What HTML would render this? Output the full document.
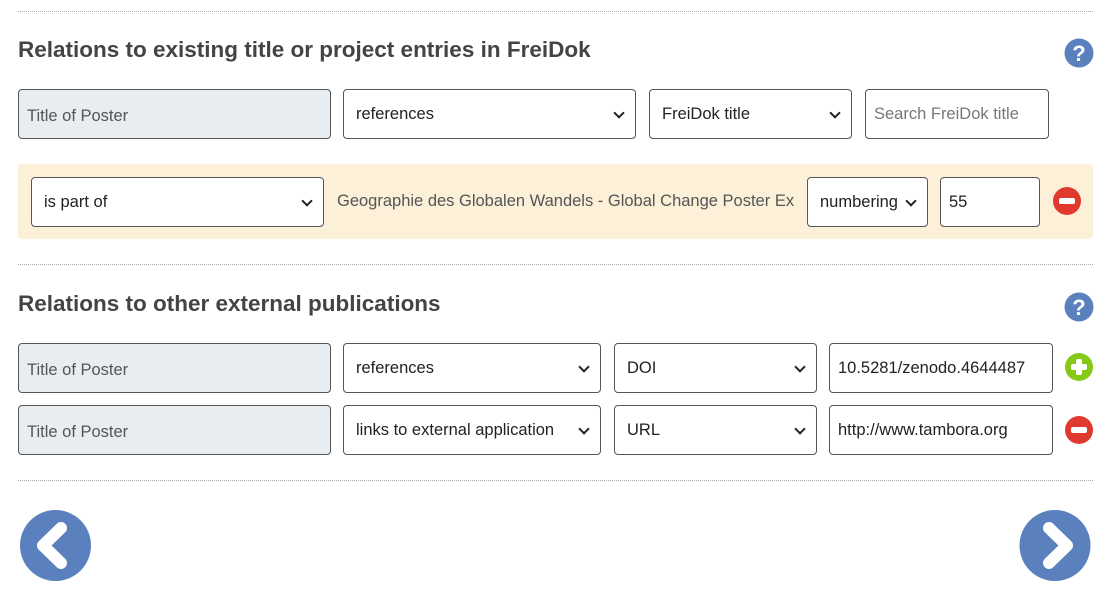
<!DOCTYPE html>
<html><head><meta charset="utf-8"><style>
*{box-sizing:border-box}
body{margin:0;width:1105px;height:601px;background:#fff;font-family:"Liberation Sans",Arial,sans-serif;position:relative;overflow:hidden}
.a{position:absolute}
.hr{position:absolute;left:18px;width:1075px;border-top:1px dotted #aaa;height:0}
h2{position:absolute;margin:0;font-size:22.5px;font-weight:bold;color:#444;left:18px}
.b{position:absolute;height:50px;border:1px solid #555;border-radius:4px;background:#fff;font-size:16.5px;color:#222;padding-left:12px;line-height:49px;white-space:nowrap;overflow:hidden}
.g{background:#e8edf1;color:#555;padding-left:8px;line-height:52px}
.s::after{content:"";position:absolute;right:12px;top:19px;width:6px;height:6px;border-right:2px solid #222;border-bottom:2px solid #222;transform:rotate(45deg)}
.ph{color:#777;padding-left:8px}
</style></head><body>
<div class="hr" style="top:11px"></div>
<h2 style="top:37px">Relations to existing title or project entries in FreiDok</h2>
<svg class="a" style="left:1064px;top:38px" width="30" height="30" viewBox="0 0 30 30"><circle cx="15" cy="15" r="14.5" fill="#5a80bd"/><text x="15" y="23" text-anchor="middle" font-family="Liberation Sans" font-weight="bold" font-size="22" fill="#fff">?</text></svg>
<div class="b g" style="left:18px;top:89px;width:313px">Title of Poster</div>
<div class="b s" style="left:343px;top:89px;width:293px">references</div>
<div class="b s" style="left:649px;top:89px;width:203px">FreiDok title</div>
<div class="b ph" style="left:865px;top:89px;width:184px">Search FreiDok title</div>
<div class="a" style="left:18px;top:164px;width:1075px;height:75px;background:#fcf0d9;border-radius:4px"></div>
<div class="b s" style="left:31px;top:177px;width:293px">is part of</div>
<div class="a" style="left:337px;top:177px;width:458px;height:50px;line-height:49px;font-size:16.5px;color:#555;white-space:nowrap;overflow:hidden">Geographie des Globalen Wandels - Global Change Poster Exp</div>
<div class="b s" style="left:807px;top:177px;width:121px">numbering</div>
<div class="b" style="left:940px;top:177px;width:100px;padding-left:8px">55</div>
<svg class="a" style="left:1053px;top:187px" width="28" height="28"><circle cx="14" cy="14" r="14" fill="#e03a2f"/><rect x="6" y="11" width="16" height="6" rx="2" fill="#fff"/></svg>
<div class="hr" style="top:264px"></div>
<h2 style="top:291px">Relations to other external publications</h2>
<svg class="a" style="left:1064px;top:292px" width="30" height="30" viewBox="0 0 30 30"><circle cx="15" cy="15" r="14.5" fill="#5a80bd"/><text x="15" y="23" text-anchor="middle" font-family="Liberation Sans" font-weight="bold" font-size="22" fill="#fff">?</text></svg>
<div class="b g" style="left:18px;top:343px;width:313px">Title of Poster</div>
<div class="b s" style="left:343px;top:343px;width:258px">references</div>
<div class="b s" style="left:614px;top:343px;width:203px">DOI</div>
<div class="b" style="left:829px;top:343px;width:224px;padding-left:8px">10.5281/zenodo.4644487</div>
<svg class="a" style="left:1065px;top:353px" width="28" height="28"><circle cx="14" cy="14" r="14" fill="#86c918"/><rect x="6" y="11" width="16" height="6" rx="2" fill="#fff"/><rect x="11" y="6" width="6" height="16" rx="2" fill="#fff"/></svg>
<div class="b g" style="left:18px;top:405px;width:313px">Title of Poster</div>
<div class="b s" style="left:343px;top:405px;width:258px">links to external application</div>
<div class="b s" style="left:614px;top:405px;width:203px">URL</div>
<div class="b" style="left:829px;top:405px;width:224px;padding-left:8px">http://www.tambora.org</div>
<svg class="a" style="left:1065px;top:416px" width="28" height="28"><circle cx="14" cy="14" r="14" fill="#e03a2f"/><rect x="6" y="11" width="16" height="6" rx="2" fill="#fff"/></svg>
<div class="hr" style="top:480px"></div>
<svg class="a" style="left:20px;top:510px" width="72" height="72"><circle cx="35.5" cy="35.5" r="35.5" fill="#5a80bd"/><path d="M41 18 L23 35.5 L41 53" fill="none" stroke="#fff" stroke-width="12" stroke-linecap="round" stroke-linejoin="round"/></svg>
<svg class="a" style="left:1019px;top:510px" width="72" height="72"><circle cx="36" cy="35.5" r="35.5" fill="#5a80bd"/><path d="M30 18 L48 35.5 L30 53" fill="none" stroke="#fff" stroke-width="12" stroke-linecap="round" stroke-linejoin="round"/></svg>
</body></html>
